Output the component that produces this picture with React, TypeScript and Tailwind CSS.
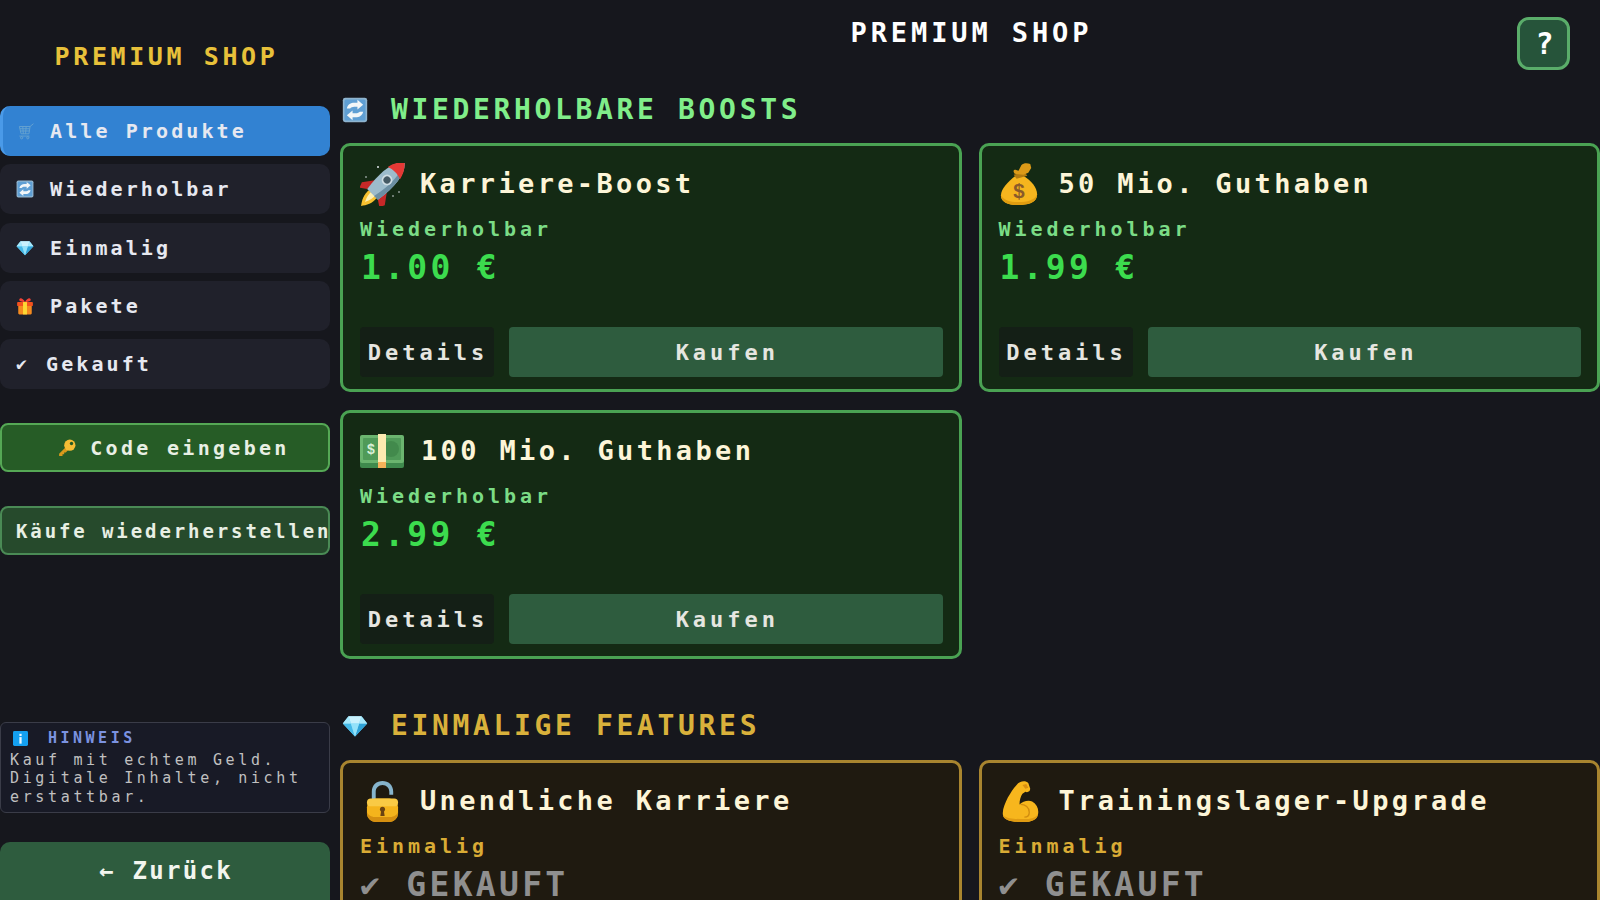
import React from "react";

type IP = { className?: string };

const Refresh = ({ className }: IP) => (
  <svg viewBox="0 0 32 32" className={className}>
    <rect x="1" y="1" width="30" height="30" rx="3" fill="#8fb4cf" />
    <rect x="3" y="3" width="26" height="26" rx="2" fill="#5f9fd4" />
    <path d="M6 14c1-5 5-7 9-7h4V3.500l7 6-7 6V12h-4c-2 0-4 1-5 2z" fill="#f2f6f8" />
    <path d="M26 18c-1 5-5 7-9 7h-4v3.500l-7-6 7-6V20h4c2 0 4-1 5-2z" fill="#f2f6f8" />
  </svg>
);

const Diamond = ({ className }: IP) => (
  <svg viewBox="0 0 32 32" className={className}>
    <path d="M8 4h16l7 9-15 16L1 13z" fill="#7fd8f7" />
    <path d="M8 4h16l-3 9H11z" fill="#c9f1fd" />
    <path d="M1 13h10l5 16z" fill="#45b9e8" />
    <path d="M31 13H21l-5 16z" fill="#2fa3d8" />
    <path d="M11 13h10l-5 16z" fill="#93e2fa" />
    <path d="M8 4l3 9H1zM24 4l-3 9h10z" fill="#a6e8fb" />
  </svg>
);

const Cart = ({ className }: IP) => (
  <svg viewBox="0 0 32 32" className={className} fill="none" stroke="#7fb2cf" strokeWidth="1.600">
    <path d="M31 3L25 8H6l3 13h14l2-13" />
    <path d="M7 12h17M8 16h16M12 8l1 13M18 8l-1 13M6 25h18" />
    <circle cx="10" cy="28" r="2" />
    <circle cx="21" cy="28" r="2" />
  </svg>
);

const Gift = ({ className }: IP) => (
  <svg viewBox="0 0 32 32" className={className}>
    <path d="M16 9C12 1 7 1 6 4s3 5 10 5zM16 9c4-8 9-8 10-5s-3 5-10 5z" fill="#f44336" />
    <rect x="4" y="14" width="24" height="17" rx="2" fill="#f58a1f" />
    <rect x="2" y="9" width="28" height="7" rx="1.500" fill="#f4511e" />
    <rect x="12.500" y="9" width="7" height="22" fill="#fdd835" />
  </svg>
);

const Key = ({ className }: IP) => (
  <svg viewBox="0 0 32 32" className={className}>
    <path d="M14 14L2 26v4h6v-3h3v-3h3l5-6z" fill="#d99a1c" />
    <circle cx="21" cy="11" r="10" fill="#f5bd35" />
    <circle cx="24" cy="8" r="3" fill="#235a25" />
  </svg>
);

const Info = ({ className }: IP) => (
  <svg viewBox="0 0 16 16" className={className}>
    <rect width="16" height="16" rx="1.500" fill="#14a0f0" />
    <rect x="6.800" y="3" width="2.400" height="2.300" fill="#e8f6ff" />
    <rect x="6.800" y="6.500" width="2.400" height="7" fill="#e8f6ff" />
  </svg>
);

const Rocket = ({ className }: IP) => (
  <svg viewBox="0 0 45 43" className={className}>
    <circle cx="18" cy="4" r="1" fill="#dfe6ea" />
    <circle cx="6" cy="14" r="0.800" fill="#dfe6ea" />
    <circle cx="33" cy="33" r="0.800" fill="#dfe6ea" />
    <circle cx="39" cy="29" r="0.800" fill="#dfe6ea" />
    <g transform="translate(24 20) rotate(45) scale(1.080)">
      <path d="M-7 3L-15 14l2 5 6-4zM7 3l8 11-2 5-6-4z" fill="#c62828" />
      <path d="M-5 14C-6 21-3 26 0 30 3 26 6 21 5 14z" fill="#f7c12f" />
      <path d="M-2.500 14C-3 19-1 22 0 25 1 22 3 19 2.500 14z" fill="#fdf0b4" />
      <path d="M0-27C8-20 10-6 7 15H-7C-10-6-8-20 0-27z" fill="#9dbccc" />
      <path d="M0-27C8-20 10-6 7 15H2C6-3 5-17 0-27z" fill="#6c8fa3" />
      <path d="M0-27C4.500-23 7-18 8-13 3-15-3-15-8-13-7-18-4.500-23 0-27z" fill="#e53935" />
      <circle cx="0" cy="-4" r="5" fill="#cfdde4" />
      <circle cx="0" cy="-4" r="3.300" fill="#455a64" />
    </g>
  </svg>
);

const MoneyBag = ({ className }: IP) => (
  <svg viewBox="0 0 40 44" className={className}>
    <path d="M16 13C8 19 1 27 1 33c0 7 7 10 17 10s20-2 20-11c0-7-6-14-14-19z" fill="#f6b51e" />
    <path d="M1 33c0 7 7 10 17 10s20-2 20-11c-2 6-10 8-19 8S4 38 1 33z" fill="#e09c10" />
    <path d="M14 12l11-3 3 4-11 3z" fill="#b27a10" />
    <path d="M15 11c-2-3-1-4 1-4l3 1 3-6c2-2 6-2 9-1l1 4-3 5-5 2z" fill="#dc9a18" />
    <text x="19.500" y="36" textAnchor="middle" fontSize="21" fontWeight="700" fontFamily="'Liberation Sans',sans-serif" fill="#8a5a2a">$</text>
  </svg>
);

const Bill = ({ className }: IP) => (
  <svg viewBox="0 0 44 34" className={className}>
    <rect x="0" y="6" width="44" height="28" rx="2" fill="#3f8a4d" />
    <rect x="0" y="1" width="44" height="28" rx="2" fill="#6bb56f" />
    <rect x="3" y="4" width="38" height="22" rx="1" fill="#4f9a58" />
    <circle cx="31" cy="15" r="8" fill="#428a4c" />
    <rect x="18" y="0" width="8" height="34" fill="#fdeab0" />
    <rect x="18" y="28" width="8" height="6" fill="#f6b25a" />
    <text x="11" y="20" textAnchor="middle" fontSize="14" fontWeight="700" fontFamily="'Liberation Sans',sans-serif" fill="#d8efd6">$</text>
  </svg>
);

const Lock = ({ className }: IP) => (
  <svg viewBox="0 0 36 44" className={className}>
    <path d="M7 22V12C7 5 12 1 18 1s11 4 11 11v3h-4v-3c0-4-3-7-7-7s-7 3-7 7v10z" fill="#86b4cc" />
    <rect x="2" y="19" width="32" height="24" rx="9" fill="#f4b41c" />
    <path d="M2 33c0 6 4 10 9 10h14c5 0 9-4 9-10-2 4-6 5-9 5H11c-3 0-7-1-9-5z" fill="#d58f10" />
    <rect x="2" y="19" width="32" height="8" rx="4" fill="#f9ca45" />
    <circle cx="18" cy="30" r="2.600" fill="#6a4312" />
    <path d="M16.800 30h2.400l1 7h-4.400z" fill="#6a4312" />
  </svg>
);

const Muscle = ({ className }: IP) => (
  <svg viewBox="0 0 38 44" className={className}>
    <path d="M15 5c3-4 9-5 12-2l2 6c0 3-3 4-5 3l-3 2c-2 3-3 7-3 11 3-3 9-5 13-3 5 3 7 8 6 13-1 6-7 8-15 8C10 43 2 41 1 36c-1-5 2-12 5-18 3-5 5-9 9-13z" fill="#f7b61d" />
    <path d="M1 36c1 5 9 7 21 7 8 0 14-2 15-8-3 4-8 5-14 5-8 0-17 0-22-4z" fill="#e09b12" />
    <path d="M19 25c5 0 9 3 9 8 0 3-2 5-5 5" fill="none" stroke="#d18d10" strokeWidth="1.400" />
    <path d="M21 5l4-1 2 4-3 1z" fill="#d98f10" />
  </svg>
);

const F = "font-['DejaVu_Sans_Mono','Liberation_Mono',monospace]";

const nav = [
  { label: "Alle Produkte", icon: <Cart className="w-[18px] h-[18px] opacity-70" />, active: true },
  { label: "Wiederholbar", icon: <Refresh className="w-[18px] h-[18px]" /> },
  { label: "Einmalig", icon: <Diamond className="w-[18px] h-[18px]" /> },
  { label: "Pakete", icon: <Gift className="w-[18px] h-[18px]" /> },
  { label: "Gekauft", icon: <span className="text-[18px] leading-none w-[14px]">✔</span> },
];

type CardData = { icon: React.ReactNode; title: string; price: string; gap: string };

const TitleRow = ({ icon, title, gap }: { icon: React.ReactNode; title: string; gap: string }) => (
  <div className={`flex items-center h-[44px] ${gap}`}>
    {icon}
    <span className="pb-[2px] pl-[1px] text-[27px] leading-none font-bold tracking-[3.350px] text-[#fdf5d8] whitespace-nowrap">{title}</span>
  </div>
);

const BoostCard = ({ c }: { c: CardData }) => (
  <div className="h-[249px] rounded-[10px] border-[3px] border-[#4aa253] bg-[#142a14] pl-[17px] pr-[16px] pt-[16px] pb-[12px] flex flex-col">
    <TitleRow icon={c.icon} title={c.title} gap={c.gap} />
    <div className="mt-[11px] text-[20px] leading-[24px] font-bold tracking-[3.950px] text-[#7bdc86]">Wiederholbar</div>
    <div className="mt-[9px] pl-[1px] text-[33px] leading-[36px] font-bold tracking-[3.300px] text-[#3cdc4e]">{c.price}</div>
    <div className="mt-auto flex gap-[15px] h-[50px]">
      <div className="w-[134px] rounded-[4px] bg-[#141f16] flex items-center justify-center pl-[2px] text-[22px] font-bold tracking-[3.950px] text-[#e6e6e0]">Details</div>
      <div className="flex-1 rounded-[4px] bg-[#2e5c3e] flex items-center justify-center pl-[3px] text-[22px] font-bold tracking-[3.950px] text-[#e6e6e0]">Kaufen</div>
    </div>
  </div>
);

const FeatureCard = ({ icon, title, gap }: { icon: React.ReactNode; title: string; gap: string }) => (
  <div className="h-[249px] rounded-[10px] border-[3px] border-[#a8852f] bg-[#1f1a10] pl-[17px] pr-[16px] pt-[16px]">
    <TitleRow icon={icon} title={title} gap={gap} />
    <div className="mt-[11px] text-[20px] leading-[24px] font-bold tracking-[3.950px] text-[#d9ab35]">Einmalig</div>
    <div className="mt-[13px] flex items-center text-[33px] leading-[28px] font-bold tracking-[3.300px] text-[#8f8f8f] whitespace-nowrap">✔ GEKAUFT</div>
  </div>
);

export default function App() {
  return (
    <div className={`${F} flex w-[1600px] h-[900px] overflow-hidden bg-[#16171d]`}>
      <aside className="w-[330px] h-[900px] shrink-0 flex flex-col">
        <div className="pt-[42px] pl-[3px] h-[106px] text-center text-[25px] leading-[30px] font-bold tracking-[3.600px] text-[#e8c13a]">PREMIUM SHOP</div>
        <div className="flex flex-col gap-[8.250px]">
          {nav.map((n) => (
            <div
              key={n.label}
              className={`h-[50px] rounded-[10px] flex items-center gap-[16px] text-[20px] font-bold tracking-[3.100px] text-[#e6e8f0] ${
                n.active ? "bg-[#3282d2] border-l-[3px] border-[#4a9ae8] pl-[13px]" : "bg-[#20212b] pl-[16px]"
              }`}
            >
              {n.icon}
              <span>{n.label}</span>
            </div>
          ))}
        </div>
        <div className="mt-[34px] h-[49px] rounded-[8px] border-2 border-[#55a855] bg-[#265c26] flex items-center justify-center gap-[14px] pl-[18px] text-[20px] font-bold tracking-[3.300px] text-[#e8efe4]">
          <Key className="w-[18px] h-[18px]" />
          <span>Code eingeben</span>
        </div>
        <div className="mt-[34px] h-[49px] rounded-[8px] border-2 border-[#4a8a55] bg-[#264a2c] flex items-center pl-[14px] pt-[1px] overflow-hidden text-[19px] font-bold tracking-[2.900px] text-[#e8efe4] whitespace-nowrap">
          Käufe wiederherstellen
        </div>
        <div className="mt-auto h-[91px] rounded-[6px] border border-[#3a3c48] bg-[#181a26] pl-[9px] pt-[8px]">
          <div className="flex items-center gap-[20px] h-[15px]">
            <Info className="w-[15px] h-[15px] ml-[3px]" />
            <span className="text-[15px] leading-none font-bold tracking-[3.500px] text-[#7b92e0]">HINWEIS</span>
          </div>
          <div className="mt-[5px] text-[15px] leading-[18.300px] tracking-[3.650px] text-[#c0c0c0]">
            Kauf mit echtem Geld.
            <br />
            Digitale Inhalte, nicht
            <br />
            erstattbar.
          </div>
        </div>
        <div className="mt-[29px] h-[58px] rounded-t-[10px] bg-[#2e5c3e] flex items-center justify-center pl-[2px] text-[24px] font-bold tracking-[2.300px] text-[#f2f5ee]">
          ← Zurück
        </div>
      </aside>
      <main className="relative flex-1 h-[900px] overflow-hidden pl-[10px]">
        <div className="h-[97px] pt-[17px] pl-[3px] text-center text-[27px] leading-[32px] font-bold tracking-[3.900px] text-white">PREMIUM SHOP</div>
        <div className="absolute top-[17px] right-[30px] w-[53px] h-[53px] rounded-[12px] border-[3px] border-[#5aad6a] bg-[#26543a] flex items-center justify-center pl-[2px] text-[30px] font-bold text-white">?</div>
        <div className="flex items-center gap-[22px] h-[26px] pl-[1px]">
          <Refresh className="w-[28px] h-[26px]" />
          <span className="text-[28px] leading-none font-bold tracking-[3.650px] text-[#80ee8a]">WIEDERHOLBARE BOOSTS</span>
        </div>
        <div className="mt-[20px] grid grid-cols-2 gap-x-[17px] gap-y-[18px]">
          <BoostCard c={{ icon: <Rocket className="w-[45px] h-[43px]" />, title: "Karriere-Boost", price: "1.00 €", gap: "gap-[14px]" }} />
          <BoostCard c={{ icon: <MoneyBag className="w-[41px] h-[43px]" />, title: "50 Mio. Guthaben", price: "1.99 €", gap: "gap-[18px]" }} />
          <BoostCard c={{ icon: <Bill className="w-[44px] h-[34px]" />, title: "100 Mio. Guthaben", price: "2.99 €", gap: "gap-[16px]" }} />
        </div>
        <div className="mt-[54px] flex items-center gap-[22px] h-[26px] pl-[1px]">
          <Diamond className="w-[28px] h-[26px]" />
          <span className="text-[28px] leading-none font-bold tracking-[3.650px] text-[#d9b13b]">EINMALIGE FEATURES</span>
        </div>
        <div className="mt-[21px] grid grid-cols-2 gap-x-[17px]">
          <FeatureCard icon={<Lock className="w-[35px] h-[43px] ml-[5px]" />} title="Unendliche Karriere" gap="gap-[19px]" />
          <FeatureCard icon={<Muscle className="w-[37px] h-[43px] ml-[3px]" />} title="Trainingslager-Upgrade" gap="gap-[19px]" />
        </div>
      </main>
    </div>
  );
}
